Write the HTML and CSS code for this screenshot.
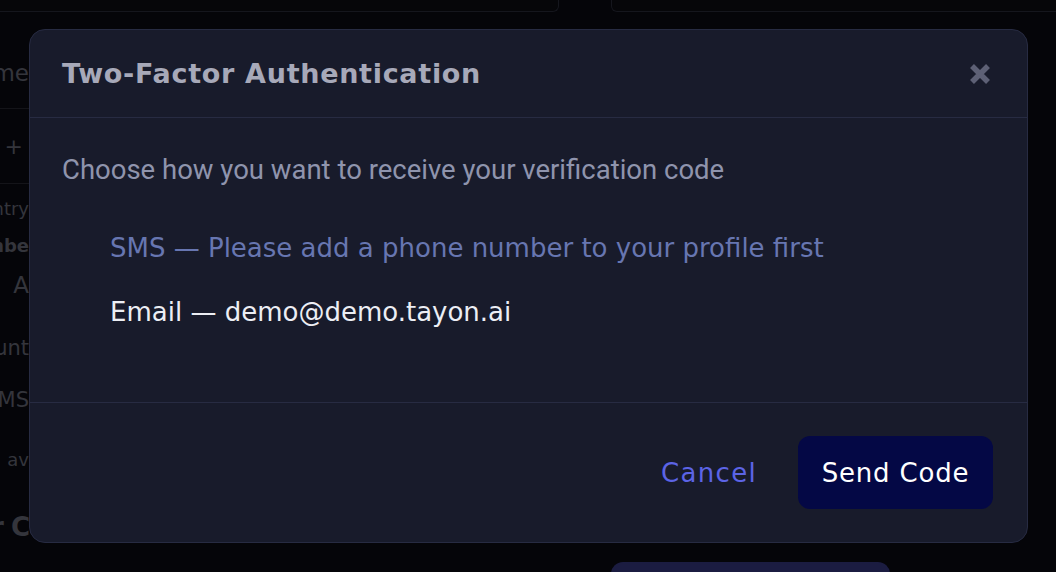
FILE: index.html
```html
<!DOCTYPE html>
<html lang="en">
<head>
<meta charset="utf-8">
<title>Two-Factor Authentication</title>
<link rel="stylesheet" href="styles.css">
</head>
<body>
<div class="page">
  <div class="topbar">
    <div class="topcard topcard-left"></div>
    <div class="topcard topcard-right"></div>
  </div>
  <div class="side">
    <div class="side-row r-me">me</div>
    <div class="side-line first"></div>
    <div class="side-row r-plus">+</div>
    <div class="side-line"></div>
    <div class="side-row r-ntry">ntry</div>
    <div class="side-row r-mbe">mbe</div>
    <div class="side-row r-a">A</div>
    <div class="side-row r-unt">unt</div>
    <div class="side-row r-ms">MS</div>
    <div class="side-row r-av">av</div>
    <div class="side-row r-c">r C</div>
  </div>
  <div class="bottom-btn"></div>
</div>

<div class="overlay">
  <div class="modal">
    <div class="modal-header">
      <h2 class="modal-title">Two-Factor Authentication</h2>
      <button class="close" aria-label="Close">
        <svg width="22" height="22" viewBox="0 0 22 22"><path d="M3 3L19 19M19 3L3 19" stroke="#5d6075" stroke-width="5.5" stroke-linecap="butt" fill="none"/></svg>
      </button>
    </div>
    <div class="modal-body">
      <p class="subtitle">Choose how you want to receive your verification code</p>
      <div class="options">
        <div class="option disabled">SMS — Please add a phone number to your profile first</div>
        <div class="option">Email — demo@demo.tayon.ai</div>
      </div>
    </div>
    <div class="modal-footer">
      <button class="btn-cancel">Cancel</button>
      <button class="btn-send">Send Code</button>
    </div>
  </div>
</div>
</body>
</html>
```

FILE: styles.css
```css
* { box-sizing: border-box; }
html, body {
  margin: 0;
  padding: 0;
  width: 1056px;
  height: 572px;
  overflow: hidden;
  background: #050509;
  font-family: "DejaVu Sans", sans-serif;
}
.page {
  position: relative;
  width: 1056px;
  height: 572px;
  overflow: hidden;
}
.topbar {
  display: flex;
  gap: 52px;
  height: 12px;
}
.topcard {
  height: 12px;
  border: 1px solid #15161d;
  border-top: none;
  border-radius: 0 0 6px 6px;
  background: #060609;
}
.topcard-left { width: 579px; margin-left: -20px; }
.topcard-right { flex: 1; margin-right: -20px; }

.side {
  width: 29px;
  overflow: hidden;
  display: flex;
  flex-direction: column;
  color: #34353c;
  white-space: nowrap;
  font-family: "DejaVu Sans", sans-serif;
}
.side-row {
  display: flex;
  justify-content: flex-end;
  align-items: center;
  font-size: 20px;
}
.side-line { height: 1px; background: #141419; flex: none; }
.side-line.first { margin-top: 16px; }
.r-me { margin-top: 42px; height: 38px; font-size: 23px; }
.r-plus { height: 74px; font-size: 22px; padding-right: 6px; }
.r-ntry { height: 48px; font-size: 18px; }
.r-mbe { height: 26px; font-size: 18px; font-weight: bold; }
.r-a { height: 54px; font-size: 23px; }
.r-unt { height: 72px; font-size: 21px; }
.r-ms { height: 32px; font-size: 21px; }
.r-av { height: 86px; font-size: 18px; }
.r-c { height: 50px; font-size: 26px; font-weight: 600; letter-spacing: -1px; }

.bottom-btn {
  position: absolute;
  left: 611px;
  top: 562px;
  width: 279px;
  height: 40px;
  border-radius: 12px;
  background: #1b1c41;
}

.overlay {
  position: absolute;
  inset: 0;
  padding: 29px 28px 29px 29px;
}
.modal {
  width: 999px;
  height: 514px;
  background: #181b2b;
  border: 1px solid #272b42;
  border-radius: 16px;
  display: flex;
  flex-direction: column;
  overflow: hidden;
}
.modal-header {
  height: 88px;
  flex: none;
  display: flex;
  align-items: center;
  justify-content: space-between;
  padding: 0 36px 0 32px;
  border-bottom: 1px solid #272b42;
}
.modal-title {
  margin: 0;
  font-family: "DejaVu Sans", sans-serif;
  font-weight: bold;
  font-size: 27px;
  color: #a7a9b9;
  letter-spacing: 0.7px;
}
.close {
  background: none;
  border: none;
  padding: 0;
  width: 22px;
  height: 22px;
  display: flex;
  cursor: pointer;
}
.modal-body {
  flex: 1;
  padding: 37px 32px 0 32px;
  border-bottom: 1px solid #272b42;
}
.subtitle {
  margin: 0;
  font-family: Roboto, sans-serif;
  font-size: 27.5px;
  line-height: 30px;
  color: #8f94ad;
}
.options {
  display: flex;
  flex-direction: column;
  padding: 48px 0 0 48px;
  gap: 34px;
}
.option {
  font-family: "DejaVu Sans", sans-serif;
  font-size: 26px;
  line-height: 30px;
  color: #eceef4;
}
.option.disabled { color: #6776b1; }

.modal-footer {
  height: 139px;
  flex: none;
  display: flex;
  align-items: center;
  justify-content: flex-end;
  padding: 0 34px 0 32px;
  gap: 41px;
}
.btn-cancel {
  background: none;
  border: none;
  padding: 0;
  font-family: "DejaVu Sans", sans-serif;
  font-size: 26px;
  letter-spacing: 1.3px;
  color: #5c64e6;
  cursor: pointer;
}
.btn-send {
  width: 195px;
  height: 73px;
  border: none;
  border-radius: 12px;
  background: #040845;
  color: #ffffff;
  font-family: "DejaVu Sans", sans-serif;
  font-size: 26px;
  letter-spacing: 0.8px;
  cursor: pointer;
}
```
